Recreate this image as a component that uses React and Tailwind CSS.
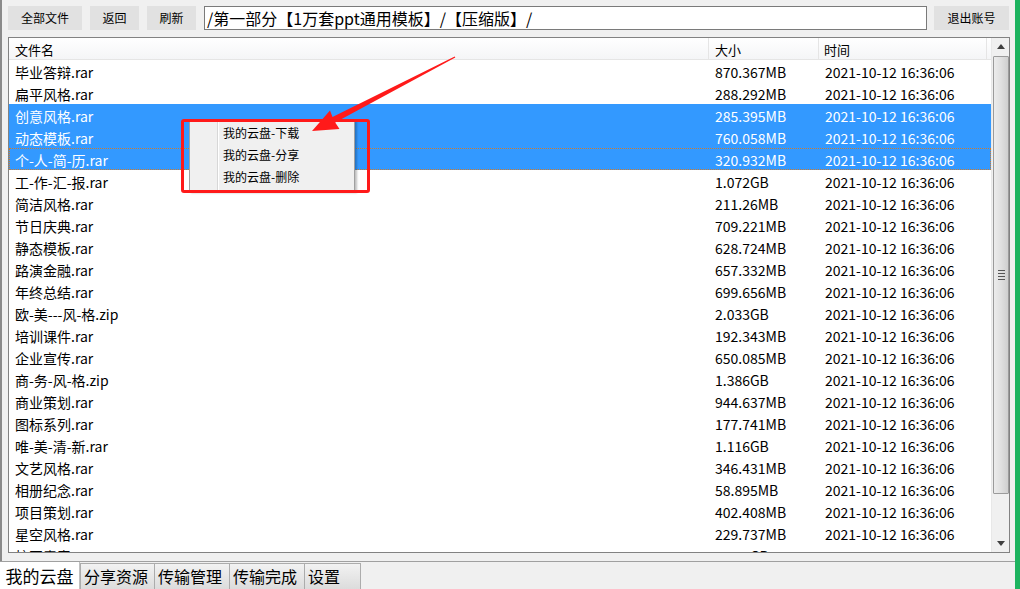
import React from "react";

const rows = [
  ["毕业答辩.rar", "870.367MB"],
  ["扁平风格.rar", "288.292MB"],
  ["创意风格.rar", "285.395MB"],
  ["动态模板.rar", "760.058MB"],
  ["个-人-简-历.rar", "320.932MB"],
  ["工-作-汇-报.rar", "1.072GB"],
  ["简洁风格.rar", "211.26MB"],
  ["节日庆典.rar", "709.221MB"],
  ["静态模板.rar", "628.724MB"],
  ["路演金融.rar", "657.332MB"],
  ["年终总结.rar", "699.656MB"],
  ["欧-美---风-格.zip", "2.033GB"],
  ["培训课件.rar", "192.343MB"],
  ["企业宣传.rar", "650.085MB"],
  ["商-务-风-格.zip", "1.386GB"],
  ["商业策划.rar", "944.637MB"],
  ["图标系列.rar", "177.741MB"],
  ["唯-美-清-新.rar", "1.116GB"],
  ["文艺风格.rar", "346.431MB"],
  ["相册纪念.rar", "58.895MB"],
  ["项目策划.rar", "402.408MB"],
  ["星空风格.rar", "229.737MB"],
  ["校园青春.rar", "1.346GB"],
];

const font = { fontFamily: '"Noto Sans CJK SC", "Noto Sans", sans-serif' };

function Btn({ w, children }) {
  return (
    <div
      className={`${w} h-[24px] bg-[#e1e1e1] flex items-center justify-center text-[12px] text-[#000]`}
    >
      {children}
    </div>
  );
}

export default function App() {
  return (
    <div
      className="w-[1020px] h-[589px] bg-[#f0f0f0] relative overflow-hidden flex"
      style={font}
    >
      <div className="w-[1015px] h-full flex flex-col">
        <div className="flex-1 flex flex-col border-l-[2px] border-[#8a8a8a]">
          {/* top bar */}
          <div className="flex items-center pt-[6px] pl-[6px] gap-[8px]">
            <Btn w="w-[74px]">全部文件</Btn>
            <Btn w="w-[49px]">返回</Btn>
            <Btn w="w-[49px]">刷新</Btn>
            <div className="w-[723px] h-[24px] bg-white border border-[#7a7a7a] flex items-center pl-[2px] text-[16px] leading-none text-black">
              /第一部分【1万套ppt通用模板】/【压缩版】/
            </div>
            <div className="ml-[-1px]">
              <Btn w="w-[75px]">退出账号</Btn>
            </div>
          </div>
          {/* list box */}
          <div className="ml-[6px] mt-[7px] w-[1002px] h-[516px] border border-[#828282] bg-white flex overflow-hidden">
            <div className="w-[982px] flex flex-col relative">
              <div className="h-[22px] flex shrink-0 bg-gradient-to-b from-white to-[#f4f5f7] border-b border-[#e5e5e5] text-[13px] text-black leading-[24px]">
                <div className="w-[700px] pl-[6px] border-r border-[#e5e5e5]">文件名</div>
                <div className="w-[110px] pl-[6px] border-r border-[#e5e5e5]">大小</div>
                <div className="w-[168px] pl-[5px] border-r border-[#e5e5e5]">时间</div>
              </div>
              <div className="flex flex-col">
                {rows.map(([name, size], i) => {
                  const sel = i >= 2 && i <= 4;
                  const focus = i === 4;
                  return (
                    <div
                      key={i}
                      className={`h-[22px] shrink-0 flex text-[14px] leading-[22px] ${
                        sel ? "bg-[#3399ff] text-white" : "text-black"
                      } ${
                        focus
                          ? "border border-dotted border-[#d07a2a]"
                          : "border border-transparent"
                      }`}
                    >
                      <div className="w-[699px] pl-[5px] whitespace-nowrap">{name}</div>
                      <div className="w-[110px] pl-[6px] whitespace-nowrap">{size}</div>
                      <div className="w-[170px] pl-[6px] whitespace-nowrap">2021-10-12 16:36:06</div>
                    </div>
                  );
                })}
              </div>
            </div>
            {/* scrollbar */}
            <div className="w-[18px] flex flex-col bg-[#f0f0f0] border-l border-[#e8e8e8] pl-[1px]">
              <div className="h-[17px] flex items-center justify-center">
                <svg width="8" height="5" viewBox="0 0 8 5">
                  <path d="M0 5 L4 0 L8 5 Z" fill="#404040" />
                </svg>
              </div>
              <div className="h-[438px] mt-[1px] border border-[#9b9b9b] rounded-[1px] bg-gradient-to-r from-[#ececec] via-[#e0e0e0] to-[#cfcfcf] flex items-center justify-center">
                <div className="flex flex-col gap-[2px]">
                  <div className="w-[7px] h-[1px] bg-[#555]" />
                  <div className="w-[7px] h-[1px] bg-[#555]" />
                  <div className="w-[7px] h-[1px] bg-[#555]" />
                  <div className="w-[7px] h-[1px] bg-[#555]" />
                </div>
              </div>
              <div className="flex-1" />
              <div className="h-[17px] flex items-center justify-center">
                <svg width="8" height="5" viewBox="0 0 8 5">
                  <path d="M0 0 L8 0 L4 5 Z" fill="#404040" />
                </svg>
              </div>
            </div>
          </div>
          <div className="flex-1" />
        </div>
        {/* tabs */}
        <div className="h-[28px] shrink-0 flex items-end border-t border-[#a0a0a0]">
          <div className="w-[80px] h-[27px] bg-white border-r border-[#c0c0c0] flex items-center justify-center text-[17px] text-black leading-none">
            我的云盘
          </div>
          <div className="flex h-[26px]">
            {[
              ["分享资源", "w-[75px]"],
              ["传输管理", "w-[76px]"],
              ["传输完成", "w-[76px]"],
              ["设置", "w-[57px]"],
            ].map(([t, w]) => (
              <div
                key={t}
                className={`${w} h-[26px] border border-[#acacac] border-b-0 -ml-[1px] first:ml-0 bg-gradient-to-b from-[#f2f2f2] to-[#dcdcdc] flex items-center pl-[3px] pb-[2px] text-[16px] text-black leading-none`}
              >
                {t}
              </div>
            ))}
          </div>
        </div>
      </div>
      <div className="w-[5px] h-full bg-[#1db35f]" />

      {/* context menu */}
      <div className="absolute left-[189px] top-[119px] w-[166px] h-[72px] bg-[#f0f0f0] border border-[#a0a0a0] shadow-[2px_2px_2px_rgba(0,0,0,0.25)] flex">
        <div className="w-[28px] border-r border-[#d7d7d7] shadow-[1px_0_0_#fff]" />
        <div className="flex flex-col pt-[2px] pl-[5px] text-[12px] text-black">
          <div className="h-[22px] leading-[22px]">我的云盘-下载</div>
          <div className="h-[22px] leading-[22px]">我的云盘-分享</div>
          <div className="h-[22px] leading-[22px]">我的云盘-删除</div>
        </div>
      </div>
      {/* red highlight */}
      <div className="absolute left-[181px] top-[119px] w-[189px] h-[74px] border-[3px] border-[#ff1a1a] rounded-[3px]" />
      {/* red arrow */}
      <svg
        className="absolute left-0 top-0 pointer-events-none"
        width="1020"
        height="589"
        viewBox="0 0 1020 589"
      >
        <polygon
          points="312,131 339.5,129 335.2,122.5 455.3,57.6 454.7,56.4 332.5,117 330,110.5"
          fill="#ff1a1a"
        />
      </svg>
    </div>
  );
}
